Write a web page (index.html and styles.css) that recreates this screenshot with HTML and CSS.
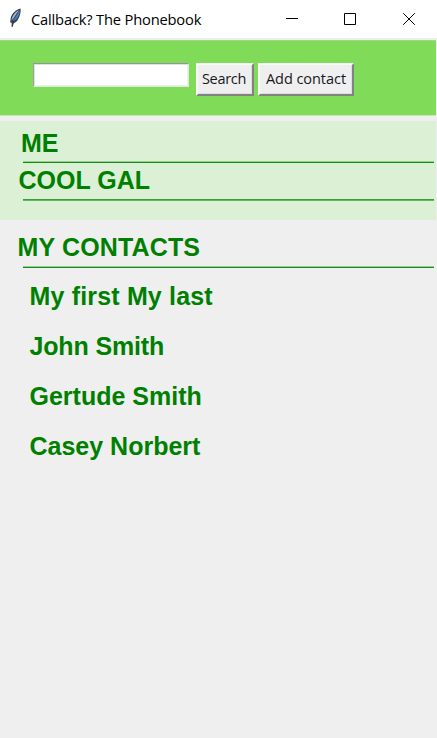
FILE: index.html
```html
<!DOCTYPE html>
<html lang="en">
<head>
<meta charset="utf-8">
<title>Callback? The Phonebook</title>
<link rel="stylesheet" href="styles.css">
</head>
<body>
<header class="titlebar">
  <svg class="feather" width="14" height="20" viewBox="0 0 14 20">
    <path d="M12.500 .6C8 1.500 3.800 5.500 2.600 10.500L2.200 14.500l1.500.3L3.600 19l1.200-.2.7-3.300 3.400-2.200C11.500 10 13.300 4.500 12.500.6Z" fill="#3a4048"/>
    <path d="M11 1.900C7.500 3.500 4 7.500 3.500 12.500L6 9.500Z" fill="#a9bdcc"/>
    <path d="M11.600 2.200C12 6 9.800 11 5.300 13.300L4.600 12Z" fill="#4683c6"/>
    <path d="M9.500 5Q6 9.500 4.200 18" fill="none" stroke="#29394c" stroke-width=".6"/>
  </svg>
  <h1 class="title">Callback? The Phonebook</h1>
  <svg class="controls" width="130" height="14" viewBox="0 0 130 14" fill="none" stroke="#000" stroke-width="1">
    <path d="M0 6.500H12M58.500 1.500h11v11h-11Z"/>
    <path d="M117.200 1.200l11.600 11.600M128.800 1.200L117.200 12.800"/>
  </svg>
</header>
<form class="toolbar">
  <input class="search" type="text" aria-label="Search">
  <button class="btn btn-search" type="button"><span>Search</span></button>
  <button class="btn btn-add" type="button"><span>Add contact</span></button>
</form>
<section class="profile">
  <h2 class="heading"><span class="me">ME</span></h2>
  <h2 class="heading name"><span class="cool">COOL GAL</span></h2>
</section>
<section class="contacts">
  <h2 class="heading"><span class="mine">MY CONTACTS</span></h2>
  <ul class="list">
    <li class="first">My first My last</li>
    <li class="second">John Smith</li>
    <li>Gertude Smith</li>
    <li>Casey Norbert</li>
  </ul>
</section>
</body>
</html>
```

FILE: styles.css
```css
* { box-sizing: border-box; }
body {
  margin: 0;
  height: 738px;
  overflow: hidden;
  background: #efefef;
  color: #008000;
  font: bold 25px/28px "Liberation Sans", Arial, sans-serif;
}
.titlebar {
  display: flex;
  align-items: flex-start;
  height: 40px;
  padding: 8px 21px 0 8px;
  background: #fff;
  border-bottom: 2px solid #ededed;
}
.feather { flex: none; }
.title {
  margin: 1px 0 0 9px;
  color: #000;
  font: 14.7px/20px "Open Sans", sans-serif;
  letter-spacing: -.18px;
  white-space: nowrap;
}
.controls { flex: none; margin: 4px 0 0 auto; }
.toolbar {
  display: flex;
  align-items: flex-start;
  width: 436px;
  height: 76px;
  padding: 23px 0 0 33px;
  background: #80db59;
  border-top: 1px solid #9bd982;
  border-bottom: 1px solid #c4e8b4;
}
.search {
  width: 156px;
  height: 24px;
  margin: -1px 0 0;
  padding: 0 3px;
  border: 1px solid;
  border-color: #959595 #d9eed1 #d9eed1 #a0a0a0;
  border-radius: 0;
  background: #fff;
  box-shadow: inset 1px 1px #e0e0e0, inset -1px -1px #eee;
  outline: 0;
}
.btn {
  height: 33px;
  margin: -1px 0 0 7px;
  padding: 0 0 1px;
  border: 2px solid;
  border-color: #f8f8f8 #828282 #828282 #f8f8f8;
  border-radius: 0;
  background: #efefef;
  box-shadow: inset -1px -1px #dedede;
  color: #171722;
  font: 14.5px/20px "Open Sans", sans-serif;
  letter-spacing: -.3px;
  white-space: nowrap;
}
.btn-search { width: 58px; padding-right: 2px; }
.btn-add { width: 96px; margin-left: 4px; letter-spacing: -.05px; }
.profile {
  width: 436px;
  height: 99px;
  margin-top: 5px;
  padding-top: 8px;
  background: #dcf0d5;
}
.heading {
  height: 34px;
  margin: 0 3px 0 23px;
  border-bottom: 1px solid #188f18;
  box-shadow: inset 0 -1px #94cf91;
  font: inherit;
  white-space: nowrap;
}
.profile .heading { margin-right: 2px; }
.profile .name {
  margin-top: 3px;
  height: 35px;
  border-bottom-color: #62b75f;
  box-shadow: inset 0 -1px #36a035;
}
.me { margin-left: -2px; }
.cool { margin-left: -4.500px; }
.mine { margin-left: -5.500px; letter-spacing: .15px; }
.contacts { padding-top: 13px; }
.contacts .heading { height: 35px; }
.list {
  display: grid;
  gap: 22px;
  margin: 14px 0 0 29.500px;
  padding: 0;
  list-style: none;
}
.first { letter-spacing: .17px; }
.second { letter-spacing: -.15px; }
```
